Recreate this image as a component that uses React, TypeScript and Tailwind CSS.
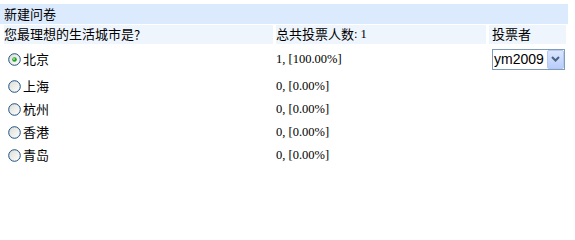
import React from "react";

const Radio = ({ checked }: { checked?: boolean }) => (
  <svg width="13" height="13" viewBox="0 0 13 13" className="shrink-0">
    <defs>
      <linearGradient id={checked ? "rg1" : "rg0"} x1="0" y1="0" x2="1" y2="1">
        <stop offset="0" stopColor="#dcdcd6" />
        <stop offset="1" stopColor="#ffffff" />
      </linearGradient>
    </defs>
    <circle cx="6.5" cy="6.5" r="5.8" fill={`url(#${checked ? "rg1" : "rg0"})`} stroke="#1c5180" strokeWidth="1" />
    {checked && (
      <>
        <circle cx="6.5" cy="6.5" r="2.3" fill="#21a121" />
        <circle cx="6" cy="6" r="0.9" fill="#a8eba8" />
      </>
    )}
  </svg>
);

const rows = [
  { city: "北京", val: "1, [100.00%]", checked: true, h: "h-[30px]" },
  { city: "上海", val: "0, [0.00%]", h: "h-[24px]" },
  { city: "杭州", val: "0, [0.00%]", h: "h-[23px]" },
  { city: "香港", val: "0, [0.00%]", h: "h-[23px]" },
  { city: "青岛", val: "0, [0.00%]", h: "h-[23px]" },
];

export default function App() {
  return (
    <div
      className="w-[575px] h-[202px] bg-white text-black text-[13px] leading-none overflow-hidden"
      style={{ fontFamily: '"Liberation Serif", "Noto Sans CJK SC", serif' }}
    >
      <div className="mt-[4px] h-[20px] w-[568px] bg-[#dbeafc] pl-[4px] flex items-center">新建问卷</div>
      <div className="mt-[1px] h-[19px] flex gap-[3px] pl-[4px]">
        <div className="w-[269px] bg-[#eef5fd] flex items-center">
          您最理想的生活城市是
          <span style={{ fontFamily: '"Noto Sans CJK SC", sans-serif' }}>?</span>
        </div>
        <div className="w-[210px] bg-[#eef5fd] flex items-center">
          总共投票人数<span className="text-[12.5px]">: 1</span>
        </div>
        <div className="w-[77px] bg-[#eef5fd] flex items-center pl-[3px]">投票者</div>
      </div>
      {rows.map((r, i) => (
        <div key={r.city} className={`${r.h} flex gap-[3px] pl-[4px]`}>
          <div className="w-[269px] flex items-center pl-[4px] gap-[2px]">
            <Radio checked={r.checked} />
            <span>{r.city}</span>
          </div>
          <div className="w-[210px] flex items-center text-[12.5px]">{r.val}</div>
          <div className="w-[77px] flex items-center pl-[3px]">
            {i === 0 && (
              <div className="w-[73px] h-[21px] border border-[#7f9db9] bg-white flex items-center">
                <span
                  className="flex-1 pl-[1px] text-[14px] leading-none"
                  style={{ fontFamily: '"Liberation Sans", Arial, sans-serif' }}
                >
                  ym2009
                </span>
                <div className="w-[17px] h-[19px] rounded-[2px] border border-[#b4c8f6] bg-gradient-to-b from-[#dbe6fd] to-[#b9cdfa] flex items-center justify-center">
                  <svg width="9" height="6" viewBox="0 0 9 6">
                    <path d="M1 1 L4.5 4.5 L8 1" fill="none" stroke="#4d6185" strokeWidth="2" />
                  </svg>
                </div>
              </div>
            )}
          </div>
        </div>
      ))}
    </div>
  );
}
